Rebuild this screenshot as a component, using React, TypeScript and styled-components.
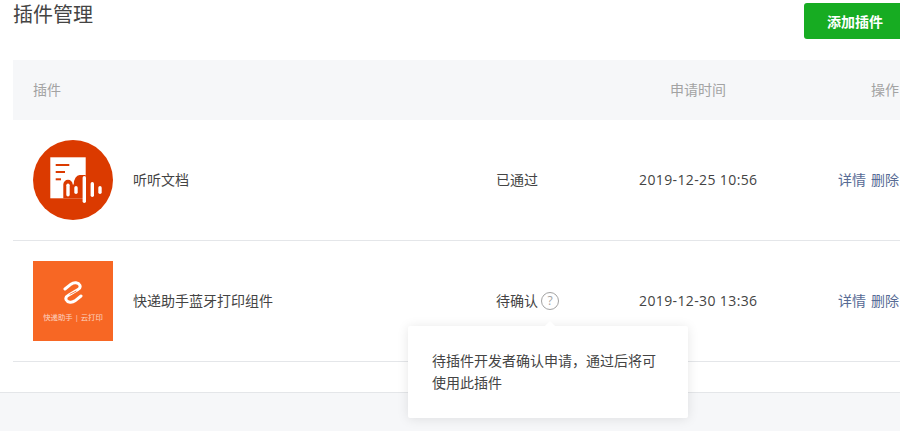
import styled, { createGlobalStyle } from 'styled-components';

const GlobalStyle = createGlobalStyle`
  html, body {
    margin: 0;
    padding: 0;
    height: 100%;
    overflow: hidden;
    background: #f6f7f9;
  }
  body {
    font-family: "Open Sans", "Noto Sans CJK SC", sans-serif;
    font-size: 14px;
    line-height: 20px;
    color: #444;
  }
`;

function App() {
  return (
    <>
      <GlobalStyle />
      <Page>
        <TitleBar>
          <Title>插件管理</Title>
          <AddButton>添加插件</AddButton>
        </TitleBar>

        <Table>
          <HeaderRow>
            <span>插件</span>
            <span />
            <TimeHead>申请时间</TimeHead>
            <OpsHead>操作</OpsHead>
          </HeaderRow>

          <Row>
            <PluginCell>
              <ListenLogo />
              <span>听听文档</span>
            </PluginCell>
            <StatusCell>已通过</StatusCell>
            <TimeCell>2019-12-25 10:56</TimeCell>
            <OpsCell>
              <OpLink>详情</OpLink>
              <OpLink>删除</OpLink>
            </OpsCell>
          </Row>

          <Row>
            <PluginCell>
              <ExpressLogo />
              <span>快递助手蓝牙打印组件</span>
            </PluginCell>
            <StatusCell>
              待确认
              <HelpWrap>
                <HelpIcon>?</HelpIcon>
                <Tooltip>待插件开发者确认申请，通过后将可使用此插件</Tooltip>
              </HelpWrap>
            </StatusCell>
            <TimeCell>2019-12-30 13:36</TimeCell>
            <OpsCell>
              <OpLink>详情</OpLink>
              <OpLink>删除</OpLink>
            </OpsCell>
          </Row>
        </Table>
      </Page>
    </>
  );
}

const ListenLogo = () => (
  <svg width="80" height="80" viewBox="0 0 80 80" style={{ display: 'block', flex: 'none' }}>
    <circle cx="40" cy="40" r="40" fill="#db3a00" />
    <rect x="17.3" y="17.3" width="35.4" height="41" fill="#fff" />
    <rect x="22.7" y="24" width="13.6" height="2" fill="#db3a00" />
    <rect x="22.7" y="31" width="9.3" height="2" fill="#db3a00" />
    <rect x="22.7" y="38.3" width="5.3" height="2" fill="#db3a00" />
    <path d="M30.3 58.3V44.5a4.7 4.7 0 0 1 9.4 0h1a6 9.5 0 0 1 6-9.5h6V58.3z" fill="#db3a00" />
    <g stroke="#fff" strokeWidth="3.4" strokeLinecap="round">
      <path d="M35 45.2v9.6" />
      <path d="M43 47.7v4.6" />
      <path d="M51.3 37.7v23.6" />
      <path d="M59.3 43.7v11.6" />
      <path d="M67 47.7v4.6" />
    </g>
  </svg>
);

const ExpressLogo = () => (
  <SquareLogo>
    <svg width="20" height="23" viewBox="0 0 20 23" fill="none" strokeLinecap="round" style={{ display: 'block' }}>
      <path
        d="M2 8 L8 3.2 C11 1 15.5 1.5 16.8 4.2 C17.8 6.5 16.8 7.6 15 8.5 L5 14.5 C3.2 15.4 2.2 16.5 3.2 18.8 C4.5 21.5 9 22 12 19.8 L18 15"
        stroke="#fff"
        strokeWidth="3"
      />
      <path d="M13 10.2 L7 13.2" stroke="#f76724" strokeWidth="0.8" />
    </svg>
    <LogoCaption>快递助手 | 云打印</LogoCaption>
  </SquareLogo>
);

const Page = styled.div`
  width: 900px;
  height: 393px;
  box-sizing: border-box;
  padding-left: 13px;
  background: #fff;
  border-bottom: 1px solid #e4e6e9;
`;

const TitleBar = styled.div`
  display: flex;
  justify-content: space-between;
  align-items: flex-start;
  height: 60px;
`;

const Title = styled.h2`
  margin: 0;
  font-size: 20px;
  font-weight: 400;
  line-height: 30px;
  color: #444;
`;

const AddButton = styled.button`
  flex: none;
  width: 102px;
  height: 36px;
  margin: 3px -6px 0 0;
  padding: 0;
  border: none;
  border-radius: 3px;
  background: #17ac22;
  color: #fff;
  font-family: inherit;
  font-size: 14px;
  font-weight: 700;
`;

const Table = styled.div`
  width: 905px;
`;

const HeaderRow = styled.div`
  display: grid;
  grid-template-columns: 463px 143px 199px 1fr;
  align-items: center;
  height: 60px;
  padding-left: 20px;
  background: #f6f7f9;
  color: #a3a3a3;
`;

const TimeHead = styled.span`
  margin-left: 31px;
`;

const OpsHead = styled.span`
  margin-left: 33px;
  white-space: nowrap;
`;

const Row = styled.div`
  display: grid;
  grid-template-columns: 463px 143px 199px 1fr;
  align-items: center;
  height: 120px;
  padding-left: 20px;
  border-bottom: 1px solid #e4e6e9;
`;

const PluginCell = styled.div`
  display: flex;
  align-items: center;
  gap: 20px;
`;

const SquareLogo = styled.div`
  display: flex;
  flex: none;
  flex-direction: column;
  align-items: center;
  width: 80px;
  height: 80px;
  padding-top: 20px;
  box-sizing: border-box;
  background: #f76724;
`;

const LogoCaption = styled.span`
  margin-top: 8px;
  font-size: 7.4px;
  line-height: 10px;
  color: #fff;
  opacity: 0.7;
  white-space: nowrap;
`;

const StatusCell = styled.div`
  display: flex;
  align-items: center;
  gap: 3px;
  white-space: nowrap;
`;

const TimeCell = styled.div`
  letter-spacing: 0.38px;
  white-space: nowrap;
`;

const OpsCell = styled.div`
  display: flex;
  gap: 5px;
  white-space: nowrap;
`;

const OpLink = styled.a`
  color: #576b95;
`;

const HelpWrap = styled.span`
  position: relative;
  display: inline-flex;
`;

const HelpIcon = styled.span`
  display: flex;
  align-items: center;
  justify-content: center;
  width: 18px;
  height: 18px;
  box-sizing: border-box;
  border: 1px solid #a3a3a3;
  border-radius: 50%;
  color: #a3a3a3;
  font-size: 12px;
  line-height: 1;
`;

const Tooltip = styled.div`
  position: absolute;
  top: 34px;
  left: -133px;
  width: 232px;
  padding: 24px;
  background: #fff;
  border-radius: 2px;
  box-shadow: 0 1px 12px rgba(0, 0, 0, 0.1);
  line-height: 22px;
  white-space: normal;

  &::before {
    content: '';
    position: absolute;
    top: -3px;
    left: 137px;
    width: 10px;
    height: 10px;
    background: #fff;
    transform: rotate(45deg);
  }
`;

export default App;
